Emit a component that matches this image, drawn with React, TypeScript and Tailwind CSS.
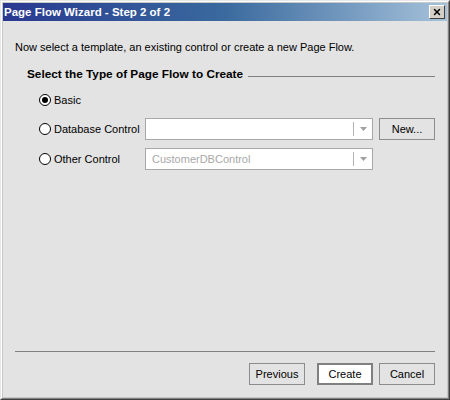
import { X } from "lucide-react";

function Radio({ checked }: { checked?: boolean }) {
  return (
    <span className="w-[12px] h-[12px] rounded-full border border-black bg-white flex items-center justify-center shrink-0">
      {checked && <span className="w-[6px] h-[6px] rounded-full bg-black" />}
    </span>
  );
}

function Combo({ value, disabled }: { value?: string; disabled?: boolean }) {
  return (
    <div className="w-[228px] h-[22px] border border-[#a8a8a8] bg-white flex items-center">
      <span
        className={`flex-1 pl-[6px] truncate ${disabled ? "text-[#a8a8a8]" : "text-black"}`}
      >
        {value}
      </span>
      <span className="w-px h-[14px] bg-[#b4b4b4]" />
      <span className="w-[18px] flex items-center justify-center">
        <svg width="7" height="4" viewBox="0 0 7 4">
          <path d="M0 0 L7 0 L3.5 4 Z" fill="#a0a0a0" />
        </svg>
      </span>
    </div>
  );
}

function Btn({ label, isDefault }: { label: string; isDefault?: boolean }) {
  return (
    <button
      className={`w-[56px] h-[22px] flex items-center justify-center text-black ${
        isDefault
          ? "border-2 border-[#808080] bg-white"
          : "border border-[#8c8c8c] bg-[#e3e3e3]"
      }`}
    >
      {label}
    </button>
  );
}

export default function App() {
  return (
    <div
      className="w-[450px] h-[400px] border border-t-[#e8e8e8] border-l-[#e8e8e8] border-r-[#404040] border-b-[#404040] text-[11px] leading-[14px]"
      style={{ fontFamily: '"Liberation Sans", Arial, sans-serif' }}
    >
      <div className="w-full h-full border border-t-white border-l-white border-r-[#808080] border-b-[#808080] bg-[#c8c8c8] p-px">
        <div className="w-full h-full flex flex-col bg-[#e3e3e3]">
          {/* Title bar */}
          <div className="h-[18px] flex items-center justify-between bg-gradient-to-r from-[#2a3890] via-[#3a6a9e] to-[#a6c2da] pl-[1px] pr-[2px]">
            <span className="text-white font-bold text-[11.5px]">
              Page Flow Wizard - Step 2 of 2
            </span>
            <span className="w-[16px] h-[14px] bg-[#d4d0c8] border border-t-white border-l-white border-r-[#404040] border-b-[#404040] flex items-center justify-center">
              <X className="w-[10px] h-[10px] text-black" strokeWidth={3.5} />
            </span>
          </div>

          {/* Body */}
          <div className="flex-1 flex flex-col px-[12px]">
            <p className="mt-[19px] text-black">
              Now select a template, an existing control or create a new Page Flow.
            </p>

            <div className="mt-[13px] pl-[12px] flex items-center">
              <span className="font-bold text-black text-[11.8px]">
                Select the Type of Page Flow to Create
              </span>
              <span className="flex-1 h-px bg-[#808080] ml-[5px] mt-[4px]" />
            </div>

            <div className="mt-[11px] pl-[24px] flex items-center h-[16px]">
              <Radio checked />
              <span className="ml-[3px] text-black">Basic</span>
            </div>

            <div className="mt-[10px] pl-[24px] flex items-center">
              <div className="w-[106px] flex items-center">
                <Radio />
                <span className="ml-[3px] text-black">Database Control</span>
              </div>
              <Combo />
              <div className="ml-[6px]">
                <Btn label="New..." />
              </div>
            </div>

            <div className="mt-[8px] pl-[24px] flex items-center">
              <div className="w-[106px] flex items-center">
                <Radio />
                <span className="ml-[3px] text-black">Other Control</span>
              </div>
              <Combo value="CustomerDBControl" disabled />
            </div>
          </div>

          {/* Footer */}
          <div className="px-[12px] pb-[12px]">
            <div className="h-px bg-[#808080]" />
            <div className="mt-[11px] flex justify-end">
              <Btn label="Previous" />
              <div className="ml-[12px]">
                <Btn label="Create" isDefault />
              </div>
              <div className="ml-[6px]">
                <Btn label="Cancel" />
              </div>
            </div>
          </div>
        </div>
      </div>
    </div>
  );
}
